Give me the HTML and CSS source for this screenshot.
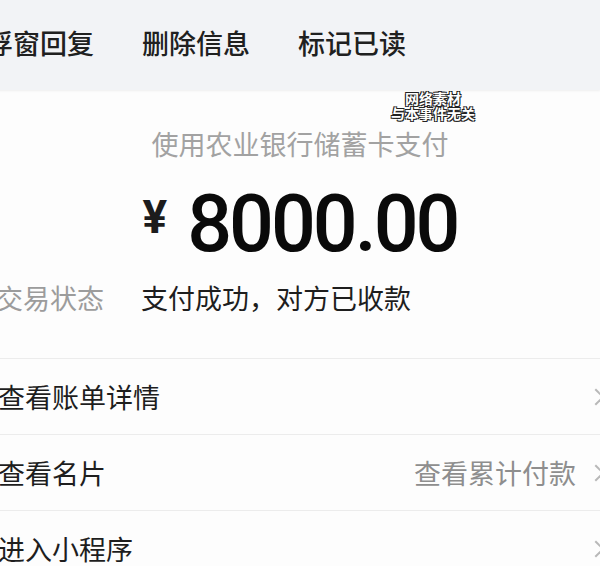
FILE: index.html
```html
<!DOCTYPE html>
<html lang="zh-CN">
<head>
  <meta charset="UTF-8">
  <meta name="viewport" content="width=device-width, initial-scale=1.0">
  <title>支付详情</title>
  <link rel="stylesheet" href="styles.css">
</head>
<body>
  <div class="topbar">
    <span class="action">浮窗回复</span>
    <span class="action">删除信息</span>
    <span class="action">标记已读</span>
  </div>

  <div class="mark">网络素材<br>与本事件无关</div>

  <div class="pay">
    <div class="pay-from">使用农业银行储蓄卡支付</div>
    <div class="amount">
      <span class="yen">¥</span>
      <span class="num">8000.00</span>
    </div>
    <div class="status">
      <span class="status-label">交易状态</span>
      <span class="status-value">支付成功，对方已收款</span>
    </div>
  </div>

  <ul class="list">
    <li class="row">
      <span class="row-title">查看账单详情</span>
      <span class="arrow"></span>
    </li>
    <li class="row">
      <span class="row-title">查看名片</span>
      <span class="row-extra">查看累计付款</span>
      <span class="arrow"></span>
    </li>
    <li class="row">
      <span class="row-title">进入小程序</span>
      <span class="arrow"></span>
    </li>
  </ul>
</body>
</html>
```

FILE: styles.css
```css
html, body {
  margin: 0;
  padding: 0;
}

body {
  width: 600px;
  height: 566px;
  overflow: hidden;
  position: relative;
  background: #fdfdfd;
  font-family: "Noto Sans CJK SC", "Noto Sans", sans-serif;
  color: #1c1c1c;
}

.topbar {
  display: flex;
  align-items: center;
  gap: 48px;
  height: 84px;
  padding-bottom: 6px;
  margin-left: -14px;
  background: #f2f3f6;
  box-shadow: 0 1px 2px rgba(0,0,0,.06);
}
.action {
  font-size: 27px;
  line-height: 1;
  font-weight: 500;
  color: #202020;
}

/* 视频水印 */
.mark {
  position: absolute;
  left: 386px;
  top: 91px;
  width: 94px;
  font-size: 14px;
  line-height: 15px;
  font-weight: bold;
  text-align: center;
  color: #fff;
  text-shadow: -1px -1px 0 #222, 1px -1px 0 #222, -1px 1px 0 #222, 1px 1px 0 #222;
}

.pay {
  padding-top: 36px;
}
.pay-from {
  text-align: center;
  font-size: 27px;
  line-height: 36px;
  color: #a2a2a2;
}
.amount {
  display: flex;
  justify-content: center;
  align-items: center;
  margin-top: 22px;
  gap: 20px;
}
.yen {
  font-family: "Roboto", "Liberation Sans", sans-serif;
  font-size: 46px;
  font-weight: bold;
  line-height: 1;
  margin-top: -14px;
}
.num {
  font-family: "Roboto", "Liberation Sans", sans-serif;
  font-size: 79px;
  font-weight: 500;
  letter-spacing: -3px;
  line-height: 80px;
  color: #0a0a0a;
}
.status {
  display: flex;
  align-items: center;
  gap: 37px;
  margin-top: 16px;
  margin-left: -4px;
  font-size: 27px;
  line-height: 36px;
}
.status-label {
  color: #9c9c9c;
}
.status-value {
  color: #1e1e1e;
}

.list {
  list-style: none;
  margin: 42px 0 0;
  padding: 0;
}
.row {
  display: flex;
  align-items: center;
  height: 75px;
  margin-left: -2px;
  border-top: 1px solid #ececec;
  font-size: 27px;
}
.row-title {
  flex: 1;
  color: #1e1e1e;
}
.row-extra {
  color: #8e8e8e;
  margin-right: 14px;
}
.arrow {
  width: 10px;
  height: 10px;
  margin-right: -2px;
  border-top: 2px solid #b8b8b8;
  border-right: 2px solid #b8b8b8;
  transform: rotate(45deg);
}
```
